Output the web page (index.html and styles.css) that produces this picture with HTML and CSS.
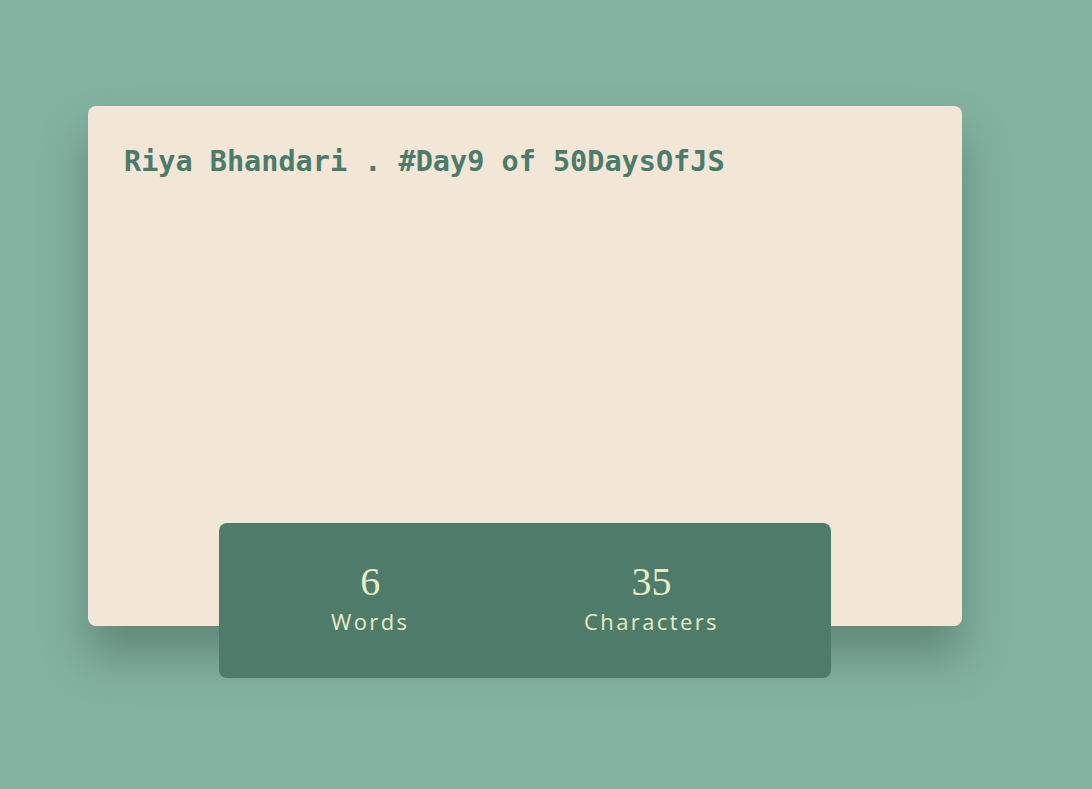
FILE: index.html
```html
<!DOCTYPE html>
<html lang="en">
<head>
<meta charset="utf-8">
<title>Word Counter</title>
<link rel="stylesheet" href="styles.css">
</head>
<body>
<main class="page">
  <section class="counter">
    <div class="card">
      <textarea class="editor" spellcheck="false">Riya Bhandari . #Day9 of 50DaysOfJS</textarea>
    </div>
    <div class="stats">
      <div class="stat">
        <span class="stat-num">6</span>
        <span class="stat-label">Words</span>
      </div>
      <div class="stat">
        <span class="stat-num">35</span>
        <span class="stat-label">Characters</span>
      </div>
    </div>
  </section>
</main>
</body>
</html>
```

FILE: styles.css
```css
html, body {
  margin: 0;
  padding: 0;
}
body {
  background: #84b2a0;
  min-height: 789px;
  font-family: "Open Sans", sans-serif;
}
.page {
  padding: 106px 0 0 88px;
}
.counter {
  width: 874px;
  display: flex;
  flex-direction: column;
}
.card {
  width: 874px;
  height: 520px;
  background: #f2e6d7;
  border-radius: 8px;
  box-shadow: 0 30px 45px rgba(30, 60, 50, 0.35);
  box-sizing: border-box;
  padding: 35px 36px;
}
.editor {
  display: block;
  width: 100%;
  height: 100%;
  border: none;
  outline: none;
  resize: none;
  background: transparent;
  padding: 0;
  margin: 0;
  font-family: "DejaVu Sans Mono", monospace;
  font-weight: bold;
  font-size: 28.5px;
  line-height: 1.5;
  color: #4c7b6b;
}
.stats {
  position: relative;
  align-self: center;
  width: 612px;
  height: 155px;
  margin-top: -103px;
  box-sizing: border-box;
  background: #4f7b6b;
  border-radius: 8px;
  display: flex;
  justify-content: space-between;
  align-items: center;
  padding: 0 112px 0 112px;
}
.stat {
  display: flex;
  flex-direction: column;
  align-items: center;
  color: #e6ecc3;
  padding-bottom: 6px;
}
.stat-num {
  font-family: "Liberation Serif", serif;
  font-size: 40px;
  line-height: 44px;
}
.stat-label {
  font-family: "Open Sans", sans-serif;
  font-size: 22px;
  letter-spacing: 2.4px;
  line-height: 28px;
  margin-top: 3px;
}
```
